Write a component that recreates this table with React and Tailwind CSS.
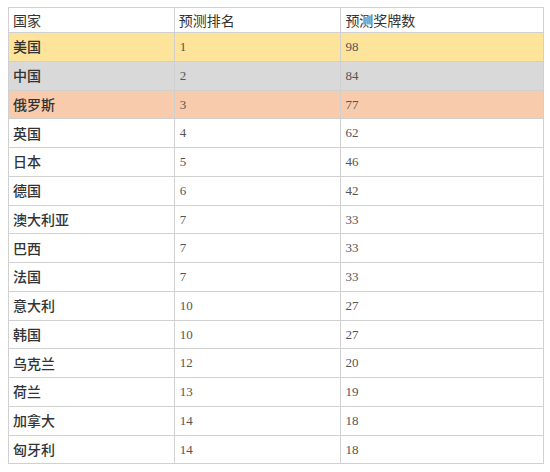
export default function App() {
  const rows = [
    ["美国", "1", "98", "bg-[#fee49b]"],
    ["中国", "2", "84", "bg-[#d9d9d9]"],
    ["俄罗斯", "3", "77", "bg-[#f8cbad]"],
    ["英国", "4", "62", ""],
    ["日本", "5", "46", ""],
    ["德国", "6", "42", ""],
    ["澳大利亚", "7", "33", ""],
    ["巴西", "7", "33", ""],
    ["法国", "7", "33", ""],
    ["意大利", "10", "27", ""],
    ["韩国", "10", "27", ""],
    ["乌克兰", "12", "20", ""],
    ["荷兰", "13", "19", ""],
    ["加拿大", "14", "18", ""],
    ["匈牙利", "14", "18", ""],
  ];
  const cjk = { fontFamily: '"Noto Sans CJK SC", sans-serif' };
  const num = { fontFamily: '"Liberation Serif", "Noto Sans CJK SC", serif' };
  return (
    <div className="w-[550px] h-[472px] bg-white pt-[7px] pl-[8px]">
      <div className="w-[536px] border-l border-t border-[#d0d0d0]">
        <div className="flex h-[25px] text-[14px] text-[#333]" style={cjk}>
          <div className="w-[166px] border-r border-b border-[#d0d0d0] pl-[4px] flex items-center">国家</div>
          <div className="w-[167px] border-r border-b border-[#d0d0d0] pl-[4px] flex items-center">预测排名</div>
          <div className="w-[203px] border-r border-b border-[#d0d0d0] pl-[4px] flex items-center">预测奖牌数</div>
        </div>
        {rows.map(([c, r, m, bg]) => (
          <div key={c} className={`flex h-[28.75px] ${bg}`}>
            <div className="w-[166px] border-r border-b border-[#d0d0d0] pl-[4px] flex items-center text-[14px] text-[#333] font-medium" style={cjk}>{c}</div>
            <div className="w-[167px] border-r border-b border-[#d0d0d0] pl-[5px] flex items-center text-[13px] text-[#555]" style={num}>{r}</div>
            <div className="w-[203px] border-r border-b border-[#d0d0d0] pl-[4px] flex items-center text-[13px] text-[#555]" style={num}>{m}</div>
          </div>
        ))}
      </div>
    </div>
  );
}
